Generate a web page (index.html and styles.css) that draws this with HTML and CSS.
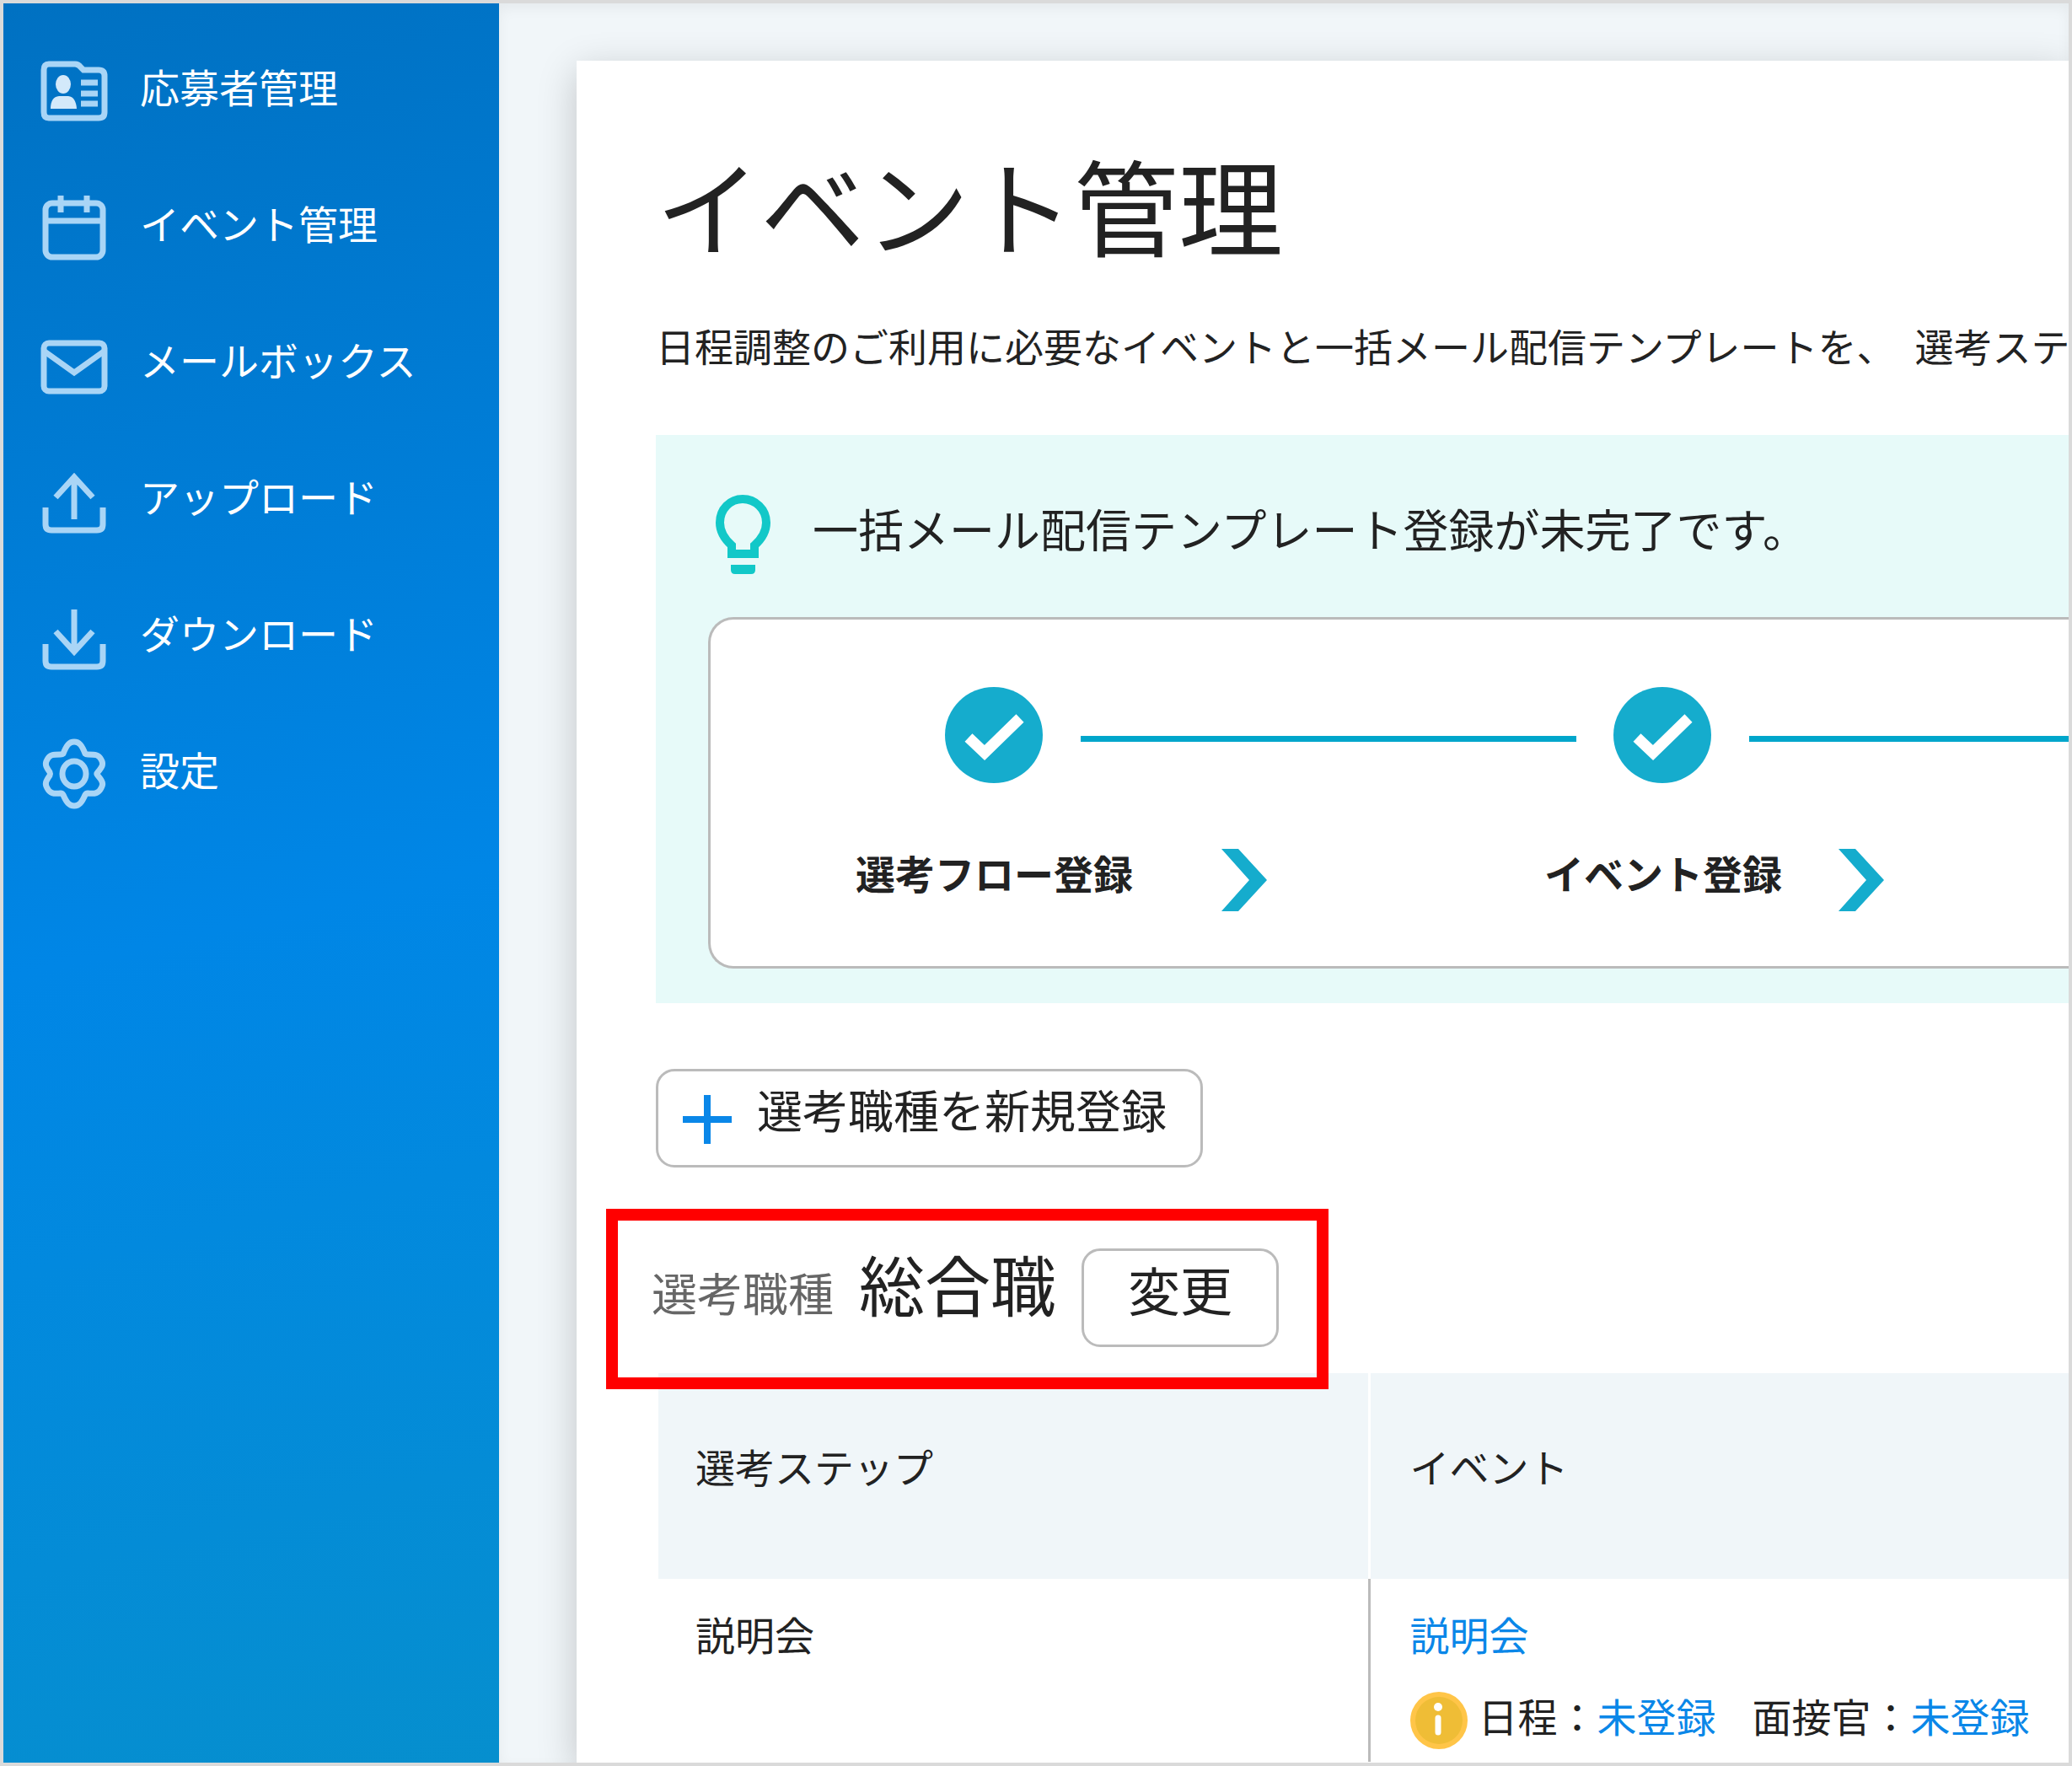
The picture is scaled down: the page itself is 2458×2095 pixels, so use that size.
FILE: index.html
```html
<!DOCTYPE html>
<html lang="ja">
<head>
    <meta charset="UTF-8">
    <meta name="viewport" content="width=device-width, initial-scale=1.0">
    <title>イベント管理</title>
    <link rel="stylesheet" href="styles.css">
</head>
<body>
    <div class="app">
        <nav class="sidebar">
            <a class="nav-link" href="#">
                <svg class="nav-icon" viewBox="0 0 80 84">
                    <path d="M10 10h31q4 0 7 4l3 3h18q7 0 7 7v43q0 7-7 7H10q-6 0-6-7V17q0-7 6-7z"/>
                    <ellipse class="fill" cx="27" cy="34" rx="9" ry="11"/>
                    <path class="fill" d="M12 63q0-14 10-15h11q9 1 10 15z"/>
                    <path d="M48 32h20M48 45h20M48 57h20"/>
                </svg>
                <span>応募者管理</span>
            </a>
            <a class="nav-link" href="#">
                <svg class="nav-icon" viewBox="0 0 80 84">
                    <rect x="6" y="13" width="68" height="64" rx="8"/>
                    <path d="M6 34h68M24 4v20M55 4v20"/>
                </svg>
                <span>イベント管理</span>
            </a>
            <a class="nav-link" href="#">
                <svg class="nav-icon" viewBox="0 0 80 84">
                    <rect x="4" y="17" width="72" height="57" rx="6"/>
                    <path d="M5 27l35 25l35-25"/>
                </svg>
                <span>メールボックス</span>
            </a>
            <a class="nav-link" href="#">
                <svg class="nav-icon" viewBox="0 0 80 84">
                    <path d="M6 50v20q0 7 7 7h54q7 0 7-7V50M40 16v48M18 38l22-24l22 24"/>
                </svg>
                <span>アップロード</span>
            </a>
            <a class="nav-link" href="#">
                <svg class="nav-icon" viewBox="0 0 80 84">
                    <path d="M6 50v20q0 7 7 7h54q7 0 7-7V50M40 9v48M18 35l22 24l22-24"/>
                </svg>
                <span>ダウンロード</span>
            </a>
            <a class="nav-link" href="#">
                <svg class="nav-icon" viewBox="0 0 80 84">
                    <path d="M27 18C31 8 34 4 40 4s9 4 13 14c1 1 1 1 3 1c9 0 13 0 16 6c3 5 2 8-4 15q-2 2 0 4c6 7 7 10 4 15c-3 6-7 7-16 6q-2 0-3 2C49 76 46 80 40 80s-9-4-13-13q-1-2-3-2c-9 1-13 0-16-6c-3-5-2-8 3-15q1-2 0-4C6 33 5 30 8 25c3-6 7-6 16-6q2 0 3-1z"/>
                    <ellipse cx="40" cy="42" rx="14" ry="15"/>
                </svg>
                <span>設定</span>
            </a>
        </nav>

        <main class="main">
            <div class="card">
                <h1>イベント管理</h1>
                <p class="description">日程調整のご利用に必要なイベントと一括メール配信テンプレートを、&ensp;選考ステ</p>

                <section class="notice">
                    <div class="notice-head">
                        <svg class="bulb" viewBox="0 0 65 94">
                            <path class="bulb-line" d="M19 70V60C10 52 5 44 5 33C5 17 17 5 32 5s28 12 28 28C60 44 55 52 46 60v10z"/>
                            <path class="bulb-base" d="M18 83h29v6q0 5-5 5H23q-5 0-5-5z"/>
                        </svg>
                        <p>一括メール配信テンプレート登録が未完了です。</p>
                    </div>
                    <div class="steps">
                        <div class="step-track">
                            <svg class="step-check" viewBox="0 0 117 114">
                                <ellipse cx="58" cy="57" rx="58" ry="57"/>
                                <path d="M28 60l19 18L89 37"/>
                            </svg>
                            <span class="step-line"></span>
                            <svg class="step-check" viewBox="0 0 117 114">
                                <ellipse cx="58" cy="57" rx="58" ry="57"/>
                                <path d="M28 60l19 18L89 37"/>
                            </svg>
                            <span class="step-line step-line-last"></span>
                        </div>
                        <div class="step-labels">
                            <strong>選考フロー登録</strong>
                            <svg class="chevron chevron-first" viewBox="0 0 54 74">
                                <path d="M0 0h20l34 37l-34 37H0l33-37z"/>
                            </svg>
                            <strong>イベント登録</strong>
                            <svg class="chevron chevron-second" viewBox="0 0 54 74">
                                <path d="M0 0h20l34 37l-34 37H0l33-37z"/>
                            </svg>
                        </div>
                    </div>
                </section>

                <button type="button" class="btn btn-add">
                    <svg class="plus" viewBox="0 0 58 58"><path d="M29 0v58M0 29h58"/></svg>
                    選考職種を新規登録
                </button>

                <div class="job-select">
                    <span class="job-label">選考職種</span>
                    <span class="job-name">総合職</span>
                    <button type="button" class="btn btn-change">変更</button>
                </div>

                <table class="event-table">
                    <thead>
                        <tr>
                            <th class="col-step">選考ステップ</th>
                            <th>イベント</th>
                        </tr>
                    </thead>
                    <tbody>
                        <tr>
                            <td class="col-step">説明会</td>
                            <td>
                                <a href="#">説明会</a>
                                <div class="event-status">
                                    <svg class="info" viewBox="0 0 68 68">
                                        <circle class="info-ring" cx="34" cy="34" r="34"/>
                                        <circle class="info-disc" cx="34" cy="34" r="28"/>
                                        <path d="M33 31v17"/>
                                        <circle class="info-dot" cx="33" cy="18" r="5"/>
                                    </svg>
                                    <span>日程：<a href="#">未登録</a></span>
                                    <span class="interviewer">面接官：<a href="#">未登録</a></span>
                                </div>
                            </td>
                        </tr>
                    </tbody>
                </table>
            </div>
        </main>
    </div>
</body>
</html>
```
FILE: styles.css
```css
* {
    box-sizing: border-box;
}
body {
    margin: 0;
    font-family: "Noto Sans CJK JP", sans-serif;
    font-size: 47px;
    line-height: 70px;
    color: #222;
}
h1, p {
    margin: 0;
    font-weight: normal;
}
a {
    color: #0a87e8;
    text-decoration: none;
}
.app {
    display: flex;
    min-height: 100vh;
    border: 4px solid #dadada;
    background: #f1f6f9;
    overflow: hidden;
}

/* Sidebar */
.sidebar {
    flex: 0 0 588px;
    padding-top: 23px;
    background: linear-gradient(167deg, #0071c2 0%, #0086e6 52%, #068fce 100%);
}
.nav-link {
    display: flex;
    align-items: center;
    gap: 38px;
    height: 162px;
    padding-left: 44px;
    color: #fff;
}
.nav-link span {
    margin-bottom: 12px;
}
.nav-icon {
    width: 80px;
    height: 84px;
    fill: none;
    stroke: #a9d5f6;
    stroke-width: 7;
}
.nav-icon .fill {
    fill: #d3e9fa;
    stroke: none;
}

/* Main card */
.main {
    flex: 1;
    display: flex;
    min-width: 0;
    padding: 68px 0 0 92px;
    box-shadow: inset 0 6px 16px rgba(0, 0, 0, 0.05);
}
.card {
    flex: 1;
    min-width: 0;
    padding: 89px 0 0 94px;
    background: #fff;
    box-shadow: 0 12px 44px rgba(0, 0, 0, 0.2);
}
h1 {
    font-size: 124px;
    line-height: 160px;
}
.description {
    margin-top: 53px;
    font-size: 46px;
    white-space: nowrap;
}

/* Notice with steps */
.notice {
    margin-top: 72px;
    padding: 71px 0 41px 62px;
    background: #e7faf9;
}
.notice-head {
    display: flex;
    gap: 50px;
    padding-left: 9px;
    font-size: 54px;
    line-height: 80px;
}
.bulb {
    width: 65px;
    height: 94px;
}
.bulb-line {
    fill: none;
    stroke: #12c8c8;
    stroke-width: 10;
}
.bulb-base {
    fill: #12c8c8;
}
.steps {
    margin-top: 51px;
    padding: 80px 0 65px;
    border: 3px solid #bbb;
    border-right: 0;
    border-radius: 30px 0 0 30px;
    background: #fff;
}
.step-track {
    display: flex;
    align-items: center;
    gap: 44px;
    padding-left: 278px;
}
.step-check {
    flex: none;
    width: 117px;
    height: 114px;
    fill: #15accd;
}
.step-check path {
    fill: none;
    stroke: #fff;
    stroke-width: 13;
}
.step-line {
    flex: 0 0 588px;
    height: 7px;
    margin-top: 8px;
    background: #00a6cb;
}
.step-line-last {
    flex: 1;
}
.step-labels {
    display: flex;
    align-items: flex-start;
    margin-top: 78px;
    padding-left: 172px;
    line-height: 56px;
    white-space: nowrap;
}
.chevron {
    flex: none;
    width: 54px;
    height: 74px;
    fill: #15accd;
}
.chevron-first {
    margin: 0 329px 0 105px;
}
.chevron-second {
    margin-left: 67px;
}

/* Buttons */
.btn {
    padding: 10px 52px 31px;
    border: 3px solid #bbb;
    border-radius: 22px;
    background: #fff;
    color: #222;
    font-family: inherit;
    line-height: 70px;
}
.btn-add {
    display: flex;
    gap: 30px;
    margin-top: 78px;
    padding-left: 29px;
    padding-right: 40px;
    font-size: 54px;
}
.plus {
    width: 58px;
    height: 58px;
    margin: 18px 0 -6px;
    stroke: #0a87e8;
    stroke-width: 8;
}
.btn-change {
    font-size: 62px;
}

/* Selected job, outlined in red over the table edge */
.job-select {
    position: relative;
    display: flex;
    align-items: baseline;
    gap: 30px;
    width: fit-content;
    margin: 49px 0 -19px -59px;
    padding: 33px 45px 36px 40px;
    border: 14px solid #f00;
}
.job-label {
    font-size: 54px;
    color: #666;
}
.job-name {
    font-size: 78px;
}

/* Event table */
.event-table {
    width: calc(100% - 3px);
    margin-left: 3px;
    border-collapse: collapse;
    table-layout: fixed;
}
.event-table th {
    padding: 75px 46px 99px 47px;
    background: #f0f6f9;
    font-weight: normal;
    text-align: left;
}
.event-table td {
    padding: 30px 0 20px 47px;
    vertical-align: top;
    white-space: nowrap;
}
.event-table .col-step {
    width: 843px;
    padding-left: 44px;
    border-right: 3px solid #bbb;
}
.event-table th.col-step {
    border-right-color: #fff;
}
.event-status {
    display: flex;
    gap: 13px;
    height: 70px;
    margin-top: 27px;
}
.interviewer {
    margin-left: 30px;
}
.info {
    width: 68px;
    height: 68px;
    margin-top: 7px;
}
.info-ring {
    fill: #ffc548;
}
.info-disc {
    fill: #efbd36;
}
.info path {
    stroke: #fff;
    stroke-width: 7;
    stroke-linecap: round;
}
.info-dot {
    fill: #fff;
}
```
